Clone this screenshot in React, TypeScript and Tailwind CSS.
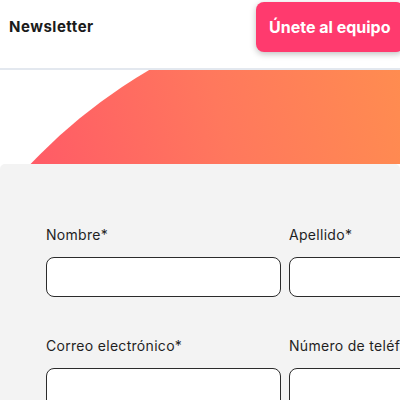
import React from "react";

export default function App() {
  const font = { fontFamily: "Inter, 'Noto Sans', sans-serif" };
  return (
    <div className="w-[400px] h-[400px] overflow-hidden bg-white" style={font}>
      <header className="h-[68px] border-b-2 border-[#e3e8ef] bg-white">
        <div className="mt-[2px] h-[50px] flex items-center justify-between pl-[9px]">
          <span className="text-[15px] font-bold text-[#1b1b1b] tracking-[0.5px]">Newsletter</span>
          <button className="shrink-0 h-[50px] w-[148px] -mr-[4px] rounded-lg bg-[#ff3a6e] text-white text-[16px] font-bold text-left pl-[13px] shadow-[0_2px_6px_rgba(0,0,0,0.25)]">
            Únete al equipo
          </button>
        </div>
      </header>
      <section className="h-[94px] bg-white">
        <svg width="400" height="94" viewBox="0 0 400 94" className="block">
          <defs>
            <linearGradient id="heroGrad" gradientUnits="userSpaceOnUse" x1="40" y1="94" x2="400" y2="0">
              <stop offset="0" stopColor="#ff5c66" />
              <stop offset="0.5" stopColor="#ff785d" />
              <stop offset="1" stopColor="#ff8c50" />
            </linearGradient>
          </defs>
          <circle cx="422" cy="466" r="540" fill="url(#heroGrad)" />
        </svg>
      </section>
      <section className="rounded-t-[5px] bg-[#f3f3f3] pt-[60px] pl-[46px]">
        <div className="grid grid-cols-[235px_235px] gap-x-[8px] gap-y-[38px] text-[14px] text-[#1f1f1f] tracking-[0.3px]">
          <div className="flex flex-col gap-[12px]">
            <label>Nombre*</label>
            <input className="h-[40px] rounded-lg border border-[#2b2b2b] bg-white" />
          </div>
          <div className="flex flex-col gap-[12px]">
            <label className="whitespace-nowrap">Apellido*</label>
            <input className="h-[40px] rounded-lg border border-[#2b2b2b] bg-white" />
          </div>
          <div className="flex flex-col gap-[12px]">
            <label>Correo electrónico*</label>
            <input className="h-[40px] rounded-lg border border-[#2b2b2b] bg-white" />
          </div>
          <div className="flex flex-col gap-[12px]">
            <label className="whitespace-nowrap">Número de teléfono*</label>
            <input className="h-[40px] rounded-lg border border-[#2b2b2b] bg-white" />
          </div>
        </div>
      </section>
    </div>
  );
}
